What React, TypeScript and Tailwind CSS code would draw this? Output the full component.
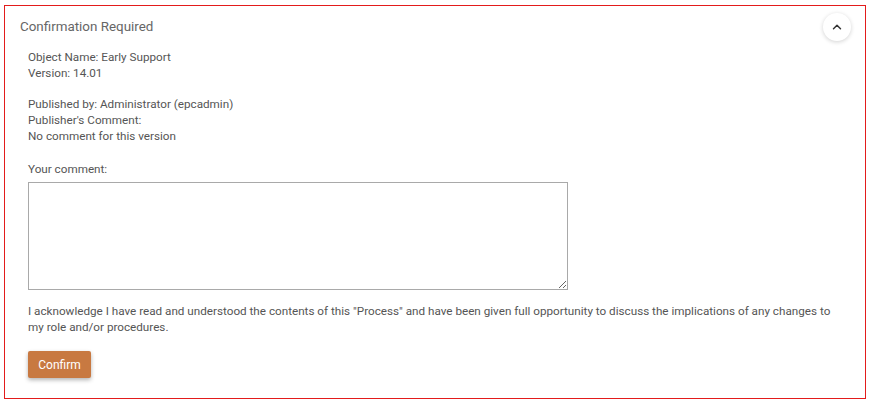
import { ChevronUp } from 'lucide-react';

export default function App() {
  return (
    <div
      className="w-[874px] h-[404px] bg-white pt-[5px] pl-[4px] overflow-hidden"
      style={{ fontFamily: 'Roboto, "Liberation Sans", sans-serif' }}
    >
      <div className="w-[862px] h-[394px] border border-[#e31b1b] bg-white pt-[7px] pl-[15px] pr-[14px]">
        {/* Header */}
        <div className="flex items-center justify-between h-[28px]">
          <h2 className="text-[13.4px] leading-[20px] text-[#666666]">Confirmation Required</h2>
          <button className="w-[28px] h-[28px] rounded-full bg-white shadow-[0_1px_4px_rgba(0,0,0,0.18)] flex items-center justify-center text-[#333]">
            <ChevronUp className="w-[14px] h-[14px]" strokeWidth={2.5} />
          </button>
        </div>

        {/* Body */}
        <div className="pl-[8px] mt-[8px] text-[11.7px] leading-[16px] text-[#555555]">
          <p>Object Name: Early Support</p>
          <p>Version: 14.01</p>
          <div className="mt-[15px]">
            <p>Published by: Administrator (epcadmin)</p>
            <p>Publisher's Comment:</p>
            <p>No comment for this version</p>
          </div>

          <label className="block mt-[17px]">Your comment:</label>
          <textarea className="block mt-[5px] w-[540px] h-[108px] border border-[#a9a9a9] bg-white outline-none p-1 text-[12px]" />

          <p className="mt-[13px] w-[825px] whitespace-nowrap">
            I acknowledge I have read and understood the contents of this "Process" and have been given full opportunity to discuss the implications of any changes to
            <br />
            my role and/or procedures.
          </p>

          <button className="mt-[16px] w-[63px] h-[27px] rounded-[2px] bg-[#c87941] text-white text-[12px] shadow-[0_2px_4px_rgba(0,0,0,0.3)]">
            Confirm
          </button>
        </div>
      </div>
    </div>
  );
}
